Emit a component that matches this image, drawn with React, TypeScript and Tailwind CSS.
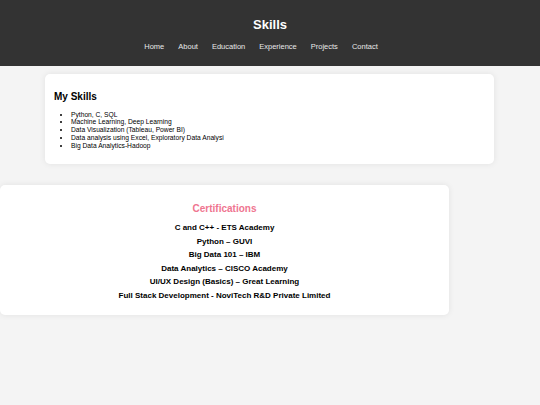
import React from 'react'

const links = ['Home', 'About', 'Education', 'Experience', 'Projects', 'Contact']

const skills = [
	'Python, C, SQL',
	'Machine Learning, Deep Learning',
	'Data Visualization (Tableau, Power BI)',
	'Data analysis using Excel, Exploratory Data Analysi',
	'Big Data Analytics-Hadoop'
]

const certs = [
	'C and C++ - ETS Academy',
	'Python – GUVI',
	'Big Data 101 – IBM',
	'Data Analytics – CISCO Academy',
	'UI/UX Design (Basics) – Great Learning',
	'Full Stack Development - NoviTech R&D Private Limited'
]

function App() {
	return (
		<div className="min-h-screen bg-[#f4f4f4] font-['Liberation_Sans',Arial,sans-serif] text-black">
			<header className="h-[66px] bg-[#333333] flex flex-col items-center pt-[17px]">
				<h1 className="text-[13px] leading-[15px] font-bold text-white">Skills</h1>
				<nav className="flex gap-[14px] mt-[10px] pr-[18px]">
					{links.map(link => (
						<a key={link} className="text-[7.5px] leading-[9px] text-[#e8e8e8]">
							{link}
						</a>
					))}
				</nav>
			</header>

			<section className="ml-[45px] w-[449px] mt-[8px] bg-white rounded-[5px] shadow-[0_0_6px_rgba(0,0,0,0.08)] pt-[17px] pb-[15px] px-[9px]">
				<h2 className="text-[10px] leading-[11.5px] font-bold">My Skills</h2>
				<ul className="list-disc pl-[17px] mt-[8px] text-[6.7px] leading-[7.8px]">
					{skills.map(s => (
						<li key={s}>{s}</li>
					))}
				</ul>
			</section>

			<section className="w-[449px] mt-[21px] bg-white rounded-[5px] shadow-[0_0_6px_rgba(0,0,0,0.08)] pt-[18px] pb-[12px] text-center">
				<h2 className="text-[10px] leading-[11.5px] font-bold text-[#ef7590]">Certifications</h2>
				<div className="mt-[6px] flex flex-col">
					{certs.map(c => (
						<p key={c} className="text-[8px] leading-[13.6px] font-bold">
							{c}
						</p>
					))}
				</div>
			</section>
		</div>
	)
}

export default App
